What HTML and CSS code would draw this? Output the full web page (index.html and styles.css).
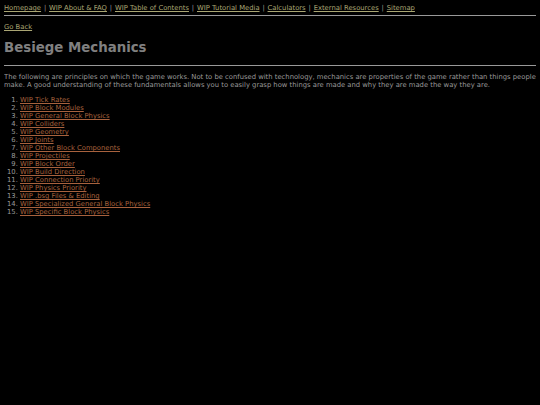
FILE: index.html
```html
<!DOCTYPE html>
<html lang="en">
<head>
<meta charset="utf-8">
<title>Besiege Mechanics</title>
<link rel="stylesheet" href="styles.css">
</head>
<body>
<nav class="topnav">
<a href="#">Homepage</a> <span class="sep">|</span> <a href="#">WIP About &amp; FAQ</a> <span class="sep">|</span> <a href="#">WIP Table of Contents</a> <span class="sep">|</span> <a href="#">WIP Tutorial Media</a> <span class="sep">|</span> <a href="#">Calculators</a> <span class="sep">|</span> <a href="#">External Resources</a> <span class="sep">|</span> <a href="#">Sitemap</a>
</nav>
<hr class="rule rule-top">
<p class="back"><a href="#">Go Back</a></p>
<h1 class="title">Besiege Mechanics</h1>
<hr class="rule rule-mid">
<p class="intro">The following are principles on which the game works. Not to be confused with technology, mechanics are properties of the game rather than things people make. A good understanding of these fundamentals allows you to easily grasp how things are made and why they are made the way they are.</p>
<ol class="topics">
<li><a href="#">WIP Tick Rates</a></li>
<li><a href="#">WIP Block Modules</a></li>
<li><a href="#">WIP General Block Physics</a></li>
<li><a href="#">WIP Colliders</a></li>
<li><a href="#">WIP Geometry</a></li>
<li><a href="#">WIP Joints</a></li>
<li><a href="#">WIP Other Block Components</a></li>
<li><a href="#">WIP Projectiles</a></li>
<li><a href="#">WIP Block Order</a></li>
<li><a href="#">WIP Build Direction</a></li>
<li><a href="#">WIP Connection Priority</a></li>
<li><a href="#">WIP Physics Priority</a></li>
<li><a href="#">WIP .bsg Files &amp; Editing</a></li>
<li><a href="#">WIP Specialized General Block Physics</a></li>
<li><a href="#">WIP Specific Block Physics</a></li>
</ol>
</body>
</html>
```
FILE: styles.css
```css
html, body {
  background: #000;
}
body {
  margin: 4px;
  font-family: "DejaVu Sans", sans-serif;
  font-size: 6.8px;
  line-height: 8px;
  color: #9a9a9a;
}
a {
  color: #aaa674;
}
.topnav {
  color: #9a9a9a;
}
.sep {
  margin: 0 0.7px;
}
.rule {
  border: none;
  height: 1px;
  background: #999;
}
.rule-top {
  margin: 3px 0 7px;
}
.back {
  margin: 0;
}
.title {
  margin: 9px 0 9px;
  font-size: 13.33px;
  line-height: 16px;
  font-weight: bold;
  color: #808080;
}
.rule-mid {
  margin: 0 0 7px;
}
.intro {
  margin: 0 0 7px;
}
.topics {
  margin: 0;
  padding-left: 16px;
}
.topics a {
  color: #a8623e;
}
```
